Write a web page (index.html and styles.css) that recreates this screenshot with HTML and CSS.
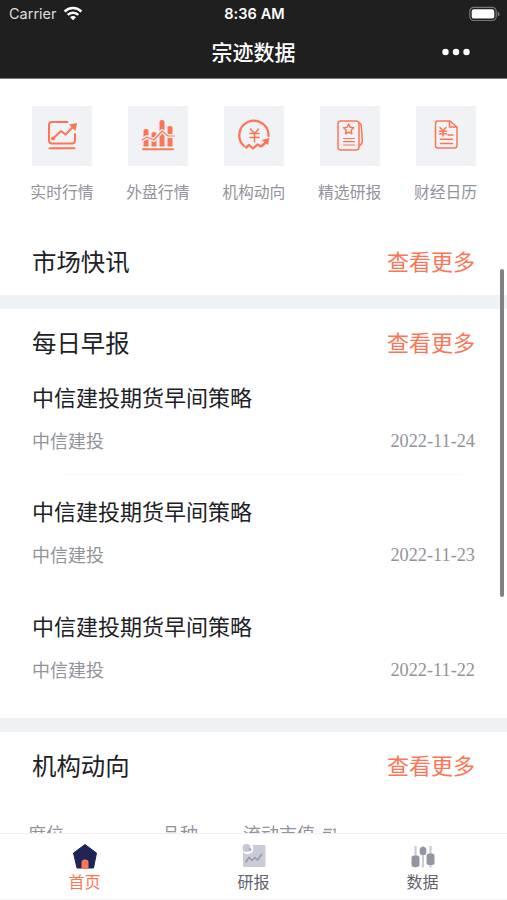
FILE: index.html
```
<!DOCTYPE html>
<html lang="zh-CN">
<head>
<meta charset="utf-8">
<title>宗迹数据</title>
<meta name="viewport" content="width=device-width, initial-scale=1"/>
<link rel="stylesheet" href="styles.css">
</head>
<body>

<header class="header">
	<div class="status">
		<div class="carrier">Carrier
			<svg width="20" height="15" viewBox="0 0 20 15" fill="none" stroke="#fff" stroke-width="2.5"><path d="M1.6 5.5a12 12 0 0 1 16.8 0M4.7 8.9a7.500 7.500 0 0 1 10.6 0"/><path d="M10 14.2 7 11.3a4.2 4.2 0 0 1 6 0z" fill="#fff" stroke="none"/></svg>
		</div>
		<div class="time">8:36 AM</div>
		<svg class="battery" width="31" height="16" viewBox="0 0 31 16"><rect x=".8" y="1.3" width="26.4" height="13.2" rx="4" fill="none" stroke="#777" stroke-width="1.2"/><rect x="2.7" y="3.2" width="22.6" height="9.4" rx="2.2" fill="#fff"/><path d="M28.6 5.5q2 .8 2 2.5t-2 2.5z" fill="#777"/></svg>
	</div>
	<div class="navbar">
		<h1>宗迹数据</h1>
		<svg class="menu" width="28" height="8" viewBox="0 0 28 8" fill="#fff"><circle cx="3.5" cy="4" r="3.2"/><circle cx="14" cy="4" r="3.2"/><circle cx="24.5" cy="4" r="3.2"/></svg>
	</div>
</header>

<main class="page">
	<nav class="links">
		<a class="link"><span class="box"><svg width="60" height="60" viewBox="0 0 60 60"><path d="M35.500 16H20q-3 0-3 3v15.500q0 3 3 3h20q3 0 3-3V28M17.500 42.200h25"/><path d="m21 32.500 8-7.500 4.500 3.500 7.500-7.500"/><path class="fill" d="m37 18.500 8-1.500-1.500 8z"/><circle class="fill" cx="21" cy="32.500" r="2"/></svg></span>实时行情</a>
		<a class="link"><span class="box"><svg width="60" height="60" viewBox="0 0 60 60"><path class="fill" d="M15.500 24.500q0-1.500 2.500-1.500t2.500 1.500v16h-5zM23.500 27.500q0-1.500 2.500-1.500t2.500 1.500v13h-5zM31.500 15.500q0-1.500 2.500-1.500t2.500 1.500v25h-5zM39.500 21.500q0-1.500 2.500-1.500t2.500 1.500v19h-5z"/><path class="gap" d="m14 34 5-3 7 3 8-9 6 5h6"/><path class="thin" d="m14 34 5-3 7 3 8-9 6 5h6"/><path d="M15 43.200h30"/></svg></span>外盘行情</a>
		<a class="link"><span class="box"><svg width="60" height="60" viewBox="0 0 60 60"><path class="bold" d="M20 40A14.600 14.600 0 1 1 44.500 30M22 41.500l3-2.500 4 3.500 4.500-4 3.500 2 5.500-4.500"/><path class="fill" d="m37.500 34 8-2-1.500 7z"/><path class="mid" d="m26.500 23 4 4.500 4-4.500M30.500 27.500v8.500M26 27.500h9M26 31.500h9"/></svg></span>机构动向</a>
		<a class="link"><span class="box"><svg width="60" height="60" viewBox="0 0 60 60"><rect class="mid" x="18" y="15" width="21" height="29" rx="3"/><path class="mid" d="M39.500 17q1.600.5 1.800 3l1 15q0 3-2.800 4.500"/><path class="mid" d="m28.700 18 1.500 3.200 3.600.5-2.600 2.500.6 3.600-3.100-1.700-3.100 1.700.6-3.600-2.600-2.500 3.600-.5z"/><path class="thin" d="M23.500 32.500h11M23.500 35.700h11M23.500 39h11"/></svg></span>精选研报</a>
		<a class="link"><span class="box"><svg width="60" height="60" viewBox="0 0 60 60"><path class="mid" d="M34 15H22q-2.500 0-2.500 2.500v22q0 2.500 2.500 2.500h16.500q2.500 0 2.500-2.500V21zM33.500 15.500V21H40"/><path class="mid" d="m24 21.500 3 3.500 3-3.500M27 25v5M23.500 25.200h7M23.500 27.700h7M32 29h5M24.500 33.200h12M24.500 37.500h12"/></svg></span>财经日历</a>
	</nav>

	<section class="section news">
		<div class="head"><h2>市场快讯</h2><a class="more">查看更多</a></div>
	</section>

	<section class="section daily">
		<div class="head"><h2>每日早报</h2><a class="more">查看更多</a></div>
		<article class="item">
			<h3>中信建投期货早间策略</h3>
			<div class="meta"><span>中信建投</span><time>2022-11-24</time></div>
			<hr>
		</article>
		<article class="item">
			<h3>中信建投期货早间策略</h3>
			<div class="meta"><span>中信建投</span><time>2022-11-23</time></div>
		</article>
		<article class="item">
			<h3>中信建投期货早间策略</h3>
			<div class="meta"><span>中信建投</span><time>2022-11-22</time></div>
		</article>
	</section>

	<section class="section trend">
		<div class="head"><h2>机构动向</h2><a class="more">查看更多</a></div>
		<div class="thead">
			<span>席位</span><span>品种</span>
			<span>流动市值 <svg width="16" height="16" viewBox="0 0 16 16" fill="none" stroke="#92939b" stroke-width="1.3"><path d="M2 4.500h8M1 7.500h8M1 12.500h8M11 5l2-1v10"/></svg></span>
		</div>
	</section>
</main>

<div class="scrollbar"></div>

<nav class="tabs">
	<a class="tab active"><svg width="26" height="27" viewBox="0 0 26 27"><path d="M13 1.500 24.500 10 21.500 25H5L1.500 10z" fill="#1f2356" stroke="#1f2356" stroke-linejoin="round"/><path d="M9.500 25.500V19q0-2.500 3.500-2.500t3.500 2.500v6.500z" fill="#fb7655"/></svg>首页</a>
	<a class="tab"><svg width="26" height="27" viewBox="0 0 26 27"><rect x="2" y="2" width="22.500" height="22" rx="1.500" fill="#c9ccd8"/><circle cx="6.500" cy="5.500" r="5.800" fill="#fff"/><circle cx="5.500" cy="5" r="4" fill="#c5c8d5"/><circle cx="9" cy="6.500" r="1.500" fill="#a8acba"/><path d="m4.500 19.500 3.500-5 3 3 3-3 2.500 2.500 4.500-6" fill="none" stroke="#9598a5" stroke-width="1.500"/></svg>研报</a>
	<a class="tab"><svg width="26" height="27" viewBox="0 0 26 27" fill="#9396a2"><path d="M5.500 3v21.500M13 3v21.500M20.500 3v21.500" stroke="#c9ccd6" stroke-width="2.200"/><rect x="1.500" y="12.500" width="8" height="11.500" rx="2.500"/><rect x="9.700" y="4" width="6.600" height="8" rx="2.500"/><rect x="16.500" y="10.500" width="8" height="11.500" rx="2.500"/></svg>数据</a>
</nav>

</body></html>
```
FILE: styles.css
```
* {box-sizing: border-box;}
body {display: flex; flex-direction: column; height: 900px; margin: 0; overflow: hidden; background: #fff; color: #202127; font-family: "Noto Sans CJK SC", sans-serif;}
h1, h2, h3 {margin: 0; font-weight: 400;}
svg {display: block; flex: none;}

.header {height: 79px; flex: none; background: #1f1f1f; border-bottom: 1px solid #777; color: #fff;}
.status {display: grid; grid-template-columns: 1fr auto 1fr; align-items: center; height: 27px; padding: 0 7px 0 9px; font: 15px/27px Inter, sans-serif;}
.carrier {display: flex; align-items: center; gap: 6px; color: #ddd; font-size: 14.5px;}
.time {font-size: 14.5px; font-weight: 600; letter-spacing: 0.1px;}
.battery {justify-self: end;}
.navbar {display: grid; grid-template-columns: 1fr auto 1fr; align-items: center; height: 50px; padding: 0 37px;}
.navbar h1 {grid-column: 2; margin-top: -2px; font-size: 21px; line-height: 50px; font-weight: 500;}
.menu {justify-self: end;}

.page {flex: 1; min-height: 0; overflow: hidden;}
.links {display: flex; height: 148px; padding: 27px 13.5px 0 14px;}
.link {display: flex; flex: 1; flex-direction: column; align-items: center; gap: 14px; color: #92939b; font-size: 15.8px; line-height: 24px;}
.box {width: 60px; height: 60px; background: #f0f2f5;}
.box svg {fill: none; stroke: #fb7655; stroke-width: 2; stroke-linecap: round; stroke-linejoin: round;}
.box .fill {fill: #fb7655; stroke: none;}
.box .thin {stroke-width: 1.2;}
.box .mid {stroke-width: 1.5;}
.box .bold {stroke-width: 2.3;}
.box .gap {stroke: #f0f2f5; stroke-width: 4;}

.section {padding: 0 32px; border-bottom: 14px solid #eff2f5;}
.head {display: flex; align-items: center; justify-content: space-between; height: 67px;}
.head h2 {font-size: 24.4px; line-height: 36px;}
.more {margin-top: -2px; color: #fb7655; font-size: 22px; line-height: 36px;}
.news {height: 82px;}
.daily {height: 423px;}
.daily .head {height: 66px;}
.item {height: 114.3px; padding-top: 5px;}
.item h3 {font-size: 22px; line-height: 32px;}
.item hr {height: 1px; margin: 18px 14px 0 32px; border: 0; background: #f8f8fa;}
.meta {display: flex; align-items: center; justify-content: space-between; height: 30px; margin-top: 14px; color: #92939b; font-size: 18px;}
.meta span {margin-top: -2px;}
.meta time {font: 18.3px/30px "Liberation Serif", serif;}
.trend {border: 0;}
.trend .head {padding-bottom: 1px;}
.thead {display: grid; grid-template-columns: 134px 81px auto; margin: 20px -4px 0; color: #92939b; font-size: 18px; line-height: 28px;}
.thead span {display: flex; align-items: center; gap: 7px;}

.scrollbar {position: absolute; top: 269px; left: 500px; width: 4px; height: 328px; border-radius: 2px; background: #808183;}

.tabs {display: flex; flex: none; height: 67px; padding-top: 9px; background: #fff; border-top: 1px solid #f0f0f2; border-bottom: 1px solid #f0f1f2;}
.tab {display: flex; flex: 1; flex-direction: column; align-items: center; color: #62636a; font-size: 16px; line-height: 22px;}
.tab.active {color: #fb7655;}
```
